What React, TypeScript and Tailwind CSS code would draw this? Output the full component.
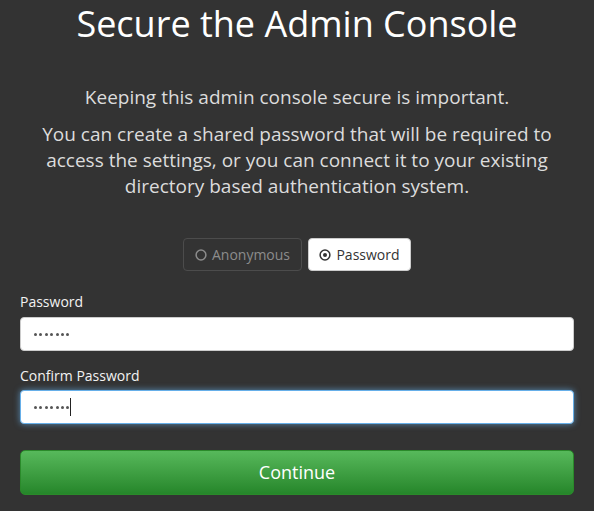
import React from "react";

function Dots() {
  return (
    <div className="flex items-center gap-[2.4px]">
      {Array.from({ length: 7 }).map((_, i) => (
        <div key={i} className="w-[3px] h-[3px] rounded-full bg-[#555]" />
      ))}
    </div>
  );
}

export default function App() {
  return (
    <div
      className="w-[594px] h-[511px] bg-[#333333] px-[20px] overflow-hidden"
      style={{ fontFamily: '"Open Sans", "Noto Sans", sans-serif' }}
    >
      <h1 className="text-center text-white text-[36px] leading-[48px] font-normal">
        Secure the Admin Console
      </h1>
      <p className="mt-[36px] text-center text-[#dcdcdc] text-[19px] leading-[26px]">
        Keeping this admin console secure is important.
      </p>
      <p className="mt-[11px] text-center text-[#dcdcdc] text-[19px] leading-[26px]">
        You can create a shared password that will be required to access the settings, or you can
        connect it to your existing directory based authentication system.
      </p>
      <div className="mt-[39px] flex justify-center gap-[6px]">
        <div className="h-[33px] w-[119px] flex items-center justify-center gap-[5px] rounded-[4px] border border-[#4c4c4c] text-[#8c8c8c] text-[14px]">
          <svg width="12" height="12" viewBox="0 0 12 12">
            <circle cx="6" cy="6" r="4.9" fill="none" stroke="#8c8c8c" strokeWidth="1.5" />
          </svg>
          <span>Anonymous</span>
        </div>
        <div className="h-[33px] w-[103px] flex items-center justify-center gap-[5px] rounded-[4px] border border-[#cccccc] bg-white text-[#333] text-[14px]">
          <svg width="12" height="12" viewBox="0 0 12 12">
            <circle cx="6" cy="6" r="4.9" fill="none" stroke="#333" strokeWidth="1.5" />
            <circle cx="6" cy="6" r="2" fill="#333" />
          </svg>
          <span>Password</span>
        </div>
      </div>
      <div className="mt-[21px] text-[14px] leading-[20px] text-[#f2f2f2]">Password</div>
      <div className="mt-[5px] h-[34px] rounded-[4px] border border-[#cccccc] bg-white flex items-center pl-[13px]">
        <Dots />
      </div>
      <div className="mt-[15px] text-[14px] leading-[20px] text-[#f2f2f2]">Confirm Password</div>
      <div className="mt-[4px] h-[34px] rounded-[4px] border border-[#66afe9] bg-white flex items-center pl-[13px] shadow-[0_0_6px_rgba(102,175,233,0.7)]">
        <Dots />
        <div className="ml-[1px] w-px h-[18px] bg-[#222]" />
      </div>
      <button className="mt-[26px] w-full h-[45px] rounded-[5px] border border-[#2a8a2a] bg-gradient-to-b from-[#57b95b] to-[#25862a] text-white text-[18px] flex items-center justify-center">
        Continue
      </button>
    </div>
  );
}
